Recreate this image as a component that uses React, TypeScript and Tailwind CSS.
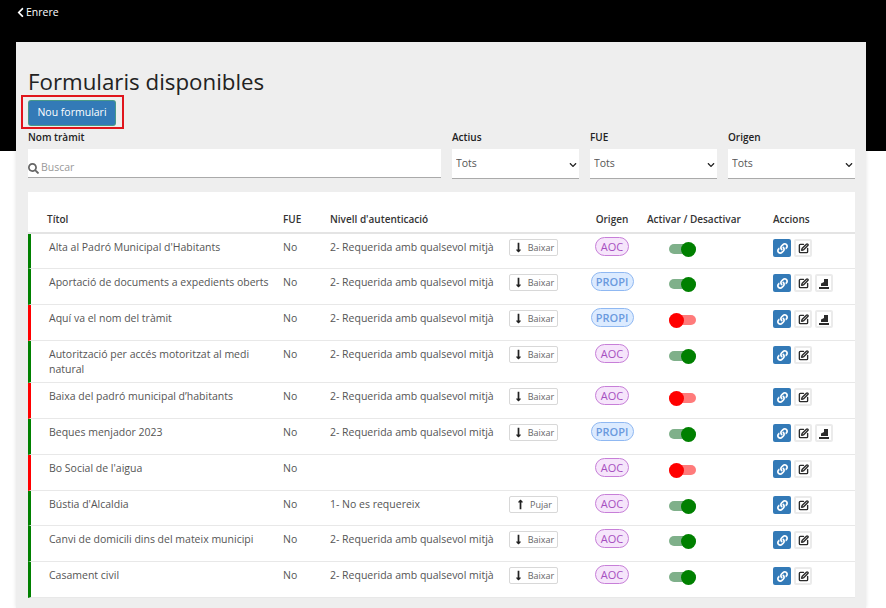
import React from 'react';
import { FaChevronDown, FaChevronLeft, FaLink, FaLongArrowAltDown, FaLongArrowAltUp, FaSearch } from 'react-icons/fa';
import { SquarePen } from 'lucide-react';

type Row = {
  title: string;
  level: string;
  dir?: 'up' | 'down';
  origin: 'AOC' | 'PROPI';
  active: boolean;
  h: string;
};

const LEVEL_2 = '2- Requerida amb qualsevol mitjà';

const ROWS: Row[] = [
  { title: "Alta al Padró Municipal d'Habitants", level: LEVEL_2, dir: 'down', origin: 'AOC', active: true, h: 'h-[35px]' },
  { title: 'Aportació de documents a expedients oberts', level: LEVEL_2, dir: 'down', origin: 'PROPI', active: true, h: 'h-[36px]' },
  { title: 'Aquí va el nom del tràmit', level: LEVEL_2, dir: 'down', origin: 'PROPI', active: false, h: 'h-[36px]' },
  { title: 'Autorització per accés motoritzat al medi natural', level: LEVEL_2, dir: 'down', origin: 'AOC', active: true, h: 'h-[42px]' },
  { title: 'Baixa del padró municipal d’habitants', level: LEVEL_2, dir: 'down', origin: 'AOC', active: false, h: 'h-[36px]' },
  { title: 'Beques menjador 2023', level: LEVEL_2, dir: 'down', origin: 'PROPI', active: true, h: 'h-[36px]' },
  { title: "Bo Social de l'aigua", level: '', origin: 'AOC', active: false, h: 'h-[36px]' },
  { title: "Bústia d'Alcaldia", level: '1- No es requereix', dir: 'up', origin: 'AOC', active: true, h: 'h-[35px]' },
  { title: 'Canvi de domicili dins del mateix municipi', level: LEVEL_2, dir: 'down', origin: 'AOC', active: true, h: 'h-[36px]' },
  { title: 'Casament civil', level: LEVEL_2, dir: 'down', origin: 'AOC', active: true, h: 'h-[36px]' },
];

const GRID = 'grid grid-cols-[252px_47px_179px_71px_64px_129px_1fr]';

const OriginBadge = ({ origin }: { origin: Row['origin'] }) =>
  origin === 'AOC' ? (
    <span className="flex h-[19px] w-[34px] items-center justify-center rounded-full border border-[#c77fd8] bg-[#f6e5fb] text-[11px] font-medium text-[#a64fc0]">
      AOC
    </span>
  ) : (
    <span className="flex h-[19px] w-[43px] items-center justify-center rounded-full border border-[#8fb8f2] bg-[#dcebff] text-[11px] font-semibold text-[#6a9ade]">
      PROPI
    </span>
  );

const Toggle = ({ active }: { active: boolean }) => (
  <div className={`relative h-[10px] w-[27px] rounded-full ${active ? 'bg-[#7fb08a]' : 'bg-[#ff7b7b]'}`}>
    <span
      className={`absolute top-[-2.5px] h-[15px] w-[15px] rounded-full ${active ? 'right-0 bg-[#008000]' : 'left-0 bg-[#ff0000]'}`}
    />
  </div>
);

const ActionBox = ({ children }: { children: React.ReactNode }) => (
  <span className="flex h-[18px] w-[18px] items-center justify-center rounded-[2px] border-2 border-[#ebebeb] bg-white text-[#2b2b2b]">
    {children}
  </span>
);

// bar with a block on top, as on the third action button
const PublishIcon = () => (
  <svg width="12" height="12" viewBox="0 0 12 12" fill="currentColor">
    <path d="M1 10h10v2H1z" />
    <path d="M3 9V6.5l3-1.5V2h4v7z" />
  </svg>
);

const FormRow = ({ row }: { row: Row }) => {
  const Arrow = row.dir === 'up' ? FaLongArrowAltUp : FaLongArrowAltDown;
  return (
    <div className={`${GRID} ${row.h} border-b border-[#e8e8e8] border-l-[3px] text-[10.5px] leading-[15px] text-[#555] ${row.active ? 'border-l-[#008000]' : 'border-l-[#ff0000]'}`}>
      <div className="pt-[6px] pl-[18px] pr-2">{row.title}</div>
      <div className="pt-[6px]">No</div>
      <div className="pt-[6px] whitespace-nowrap">{row.level}</div>
      <div className="pt-[5px]">
        {row.dir && (
          <span className="flex h-[17px] w-[49px] items-center justify-center gap-[4px] rounded-[2px] border border-[#d8d8d8] bg-white text-[9px] text-[#666]">
            <Arrow className="text-[11px] text-[#222]" />
            {row.dir === 'up' ? 'Pujar' : 'Baixar'}
          </span>
        )}
      </div>
      <div className="flex justify-center pt-[3px]">
        <div>
          <OriginBadge origin={row.origin} />
        </div>
      </div>
      <div className="pt-[10px] pl-[25px]">
        <Toggle active={row.active} />
      </div>
      <div className="flex items-start gap-[3px] pt-[5px]">
        <span className="flex h-[18px] w-[18px] items-center justify-center rounded-[2px] bg-[#337ab7] text-white">
          <FaLink className="text-[11px]" />
        </span>
        <ActionBox>
          <SquarePen size={11} strokeWidth={3} />
        </ActionBox>
        {row.origin === 'PROPI' && (
          <ActionBox>
            <PublishIcon />
          </ActionBox>
        )}
      </div>
    </div>
  );
};

const FilterSelect = ({ label }: { label: string }) => (
  <div className="w-[127px]">
    <div className="h-[19px] text-[10px] font-semibold leading-[15px] text-[#222]">{label}</div>
    <div className="relative">
      <select className="block h-[30px] w-full appearance-none border-b border-[#aaa] bg-white pt-[1px] pl-[4px] text-[10.5px] text-[#555]">
        <option>Tots</option>
      </select>
      <FaChevronDown className="absolute top-[12px] right-[2px] text-[8px] text-[#222]" />
    </div>
  </div>
);

export default function App() {
  return (
    <div className="h-[608px] overflow-hidden bg-white font-['Open_Sans',sans-serif]">
      <header className="h-[151px] bg-black pt-[5px] pl-[15px]">
        <a className="flex items-center text-[10.5px] leading-[15px] text-white">
          <FaChevronLeft className="text-[11px]" />
          Enrere
        </a>
      </header>

      <main className="mx-[16px] mt-[-109px] h-[566px] w-[850px] bg-[#eeeeee] pr-[11px] pl-[12px] pt-[25px] shadow-[0_0_4px_rgba(0,0,0,0.12)]">
        <h1 className="h-[29px] text-[22.3px] font-normal leading-[29px] text-[#222]">Formularis disponibles</h1>

        <div className="mt-[-1px] ml-[-7px] h-[34px] w-[103px] border-2 border-[#e0151c] pt-[3px] pl-[5px]">
          <button className="block h-[26px] w-[88px] rounded-[3px] border border-[#5cb85c]/50 bg-[#337ab7] text-[10.5px] text-white">
            Nou formulari
          </button>
        </div>

        <div className="mt-[1px] flex gap-[11px]">
          <div className="w-[413px]">
            <div className="h-[19px] text-[10px] font-semibold leading-[15px] text-[#222]">Nom tràmit</div>
            <div className="flex h-[29px] items-center gap-[2px] border-b border-[#aaa] bg-white pt-[10px]">
              <FaSearch className="text-[11px] text-[#666]" />
              <span className="text-[10.5px] text-[#999]">Buscar</span>
            </div>
          </div>
          <FilterSelect label="Actius" />
          <FilterSelect label="FUE" />
          <FilterSelect label="Origen" />
        </div>

        <section className="mt-[13px] w-[827px] bg-white">
          <div className={`${GRID} h-[42px] items-end border-b-2 border-[#e4e4e4] pb-[5px] pl-[3px] text-[10px] font-semibold leading-[15px] text-[#333]`}>
            <div className="pl-[16px]">Títol</div>
            <div>FUE</div>
            <div className="whitespace-nowrap">Nivell d'autenticació</div>
            <div />
            <div className="text-center">Origen</div>
            <div className="whitespace-nowrap pl-[3px]">Activar / Desactivar</div>
            <div>Accions</div>
          </div>
          {ROWS.map((row) => (
            <FormRow key={row.title} row={row} />
          ))}
        </section>
      </main>
    </div>
  );
}
